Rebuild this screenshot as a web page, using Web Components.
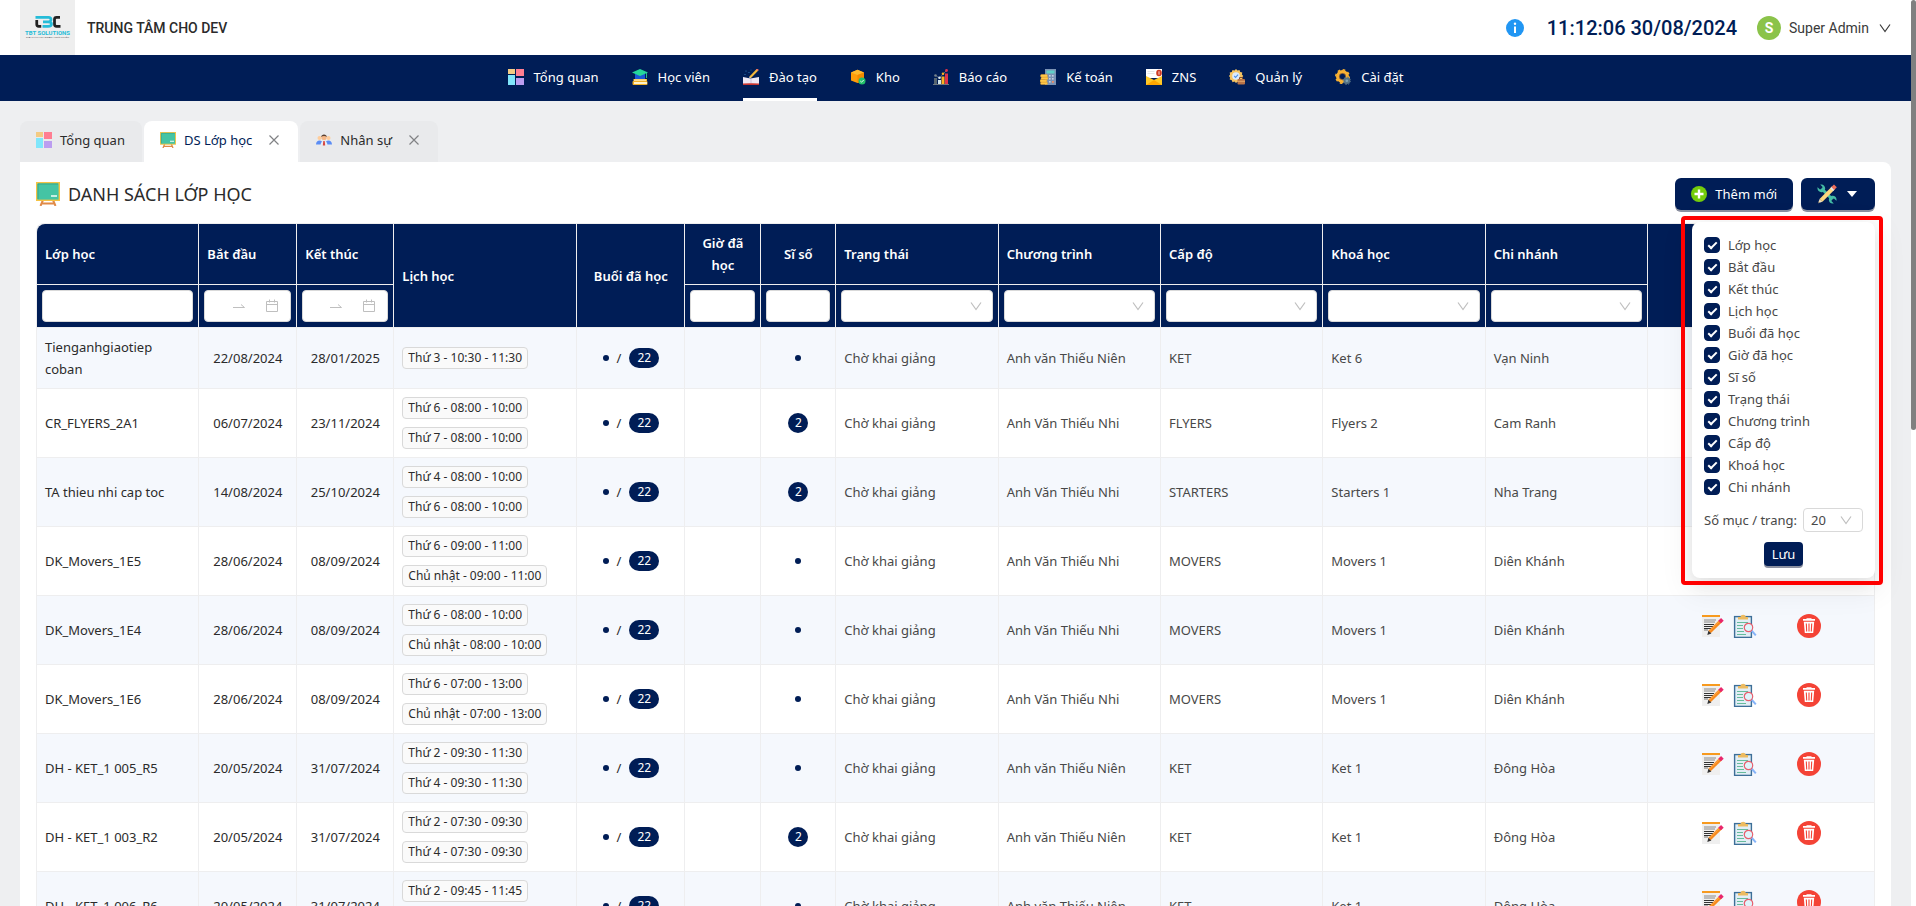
<!DOCTYPE html>
<html lang="vi">
<head>
<meta charset="utf-8">
<meta name="viewport" content="width=device-width, initial-scale=1">
<title>Danh sách lớp học</title>
<style>
  html, body { margin: 0; height: 100%; }
  body {
    --navy: #001d56;
    --line: #eeeeef;
    --text: #2b2b2b;
    font: 13px/22px "Noto Sans", "Open Sans", sans-serif;
    color: var(--text);
    background: #eeeff1;
  }
</style>
</head>
<body>
<app-shell>
  <app-header slot="header" org="TRUNG TÂM CHO DEV" time="11:12:06 30/08/2024" user="Super Admin"></app-header>
  <main-nav slot="nav">
    <nav-item icon="dashboard">Tổng quan</nav-item>
    <nav-item icon="student">Học viên</nav-item>
    <nav-item icon="training" active>Đào tạo</nav-item>
    <nav-item icon="box">Kho</nav-item>
    <nav-item icon="chart">Báo cáo</nav-item>
    <nav-item icon="accounting">Kế toán</nav-item>
    <nav-item icon="mail">ZNS</nav-item>
    <nav-item icon="manage">Quản lý</nav-item>
    <nav-item icon="settings">Cài đặt</nav-item>
  </main-nav>
  <page-tabs>
    <page-tab icon="dashboard">Tổng quan</page-tab>
    <page-tab icon="board" active closable>DS Lớp học</page-tab>
    <page-tab icon="people" closable>Nhân sự</page-tab>
  </page-tabs>
  <content-panel heading="DANH SÁCH LỚP HỌC" icon="board">
    <panel-button slot="actions" icon="plus">Thêm mới</panel-button>
    <column-menu slot="actions"></column-menu>
    <class-table></class-table>
  </content-panel>
</app-shell>

<script>
const ICONS = {
  dashboard: ['0 0 16 16', `<rect width="7" height="5" fill="#f3cb84"/><rect x="8" width="8" height="7" fill="#ff7e92"/><rect y="6" width="7" height="10" fill="#80e6fb"/><rect x="8" y="9" width="8" height="7" fill="#bb9df0"/>`],
  board: ['0 0 24 24', `<path d="M7 18 4.500 24M17 18l2.500 6M5.500 21.500h13" stroke="#e08a48" stroke-width="2" fill="none"/><rect x=".7" y=".7" width="22.600" height="17.600" fill="#45c4a4" stroke="#f5c344" stroke-width="1.400"/><path d="M2 17V2h20" fill="none" stroke="#36a589" stroke-width="1"/><rect x="15" y="13" width="6" height="2" fill="#c9eee3"/>`],
  people: ['0 0 16 16', `<circle cx="3.500" cy="6" r="2" fill="#ffcd9c"/><circle cx="12.500" cy="6" r="2" fill="#ffcd9c"/><path d="M0 12.500c0-5.500 7-5.500 7 0zM9 12.500c0-5.500 7-5.500 7 0z" fill="#5b8df5"/><path d="M4.500 13.500c0-6.500 7-6.500 7 0z" fill="#e8edf5"/><path d="M7.300 9h1.400l.5 4.500H6.800z" fill="#d8473f"/><circle cx="8" cy="5.500" r="2.600" fill="#f5b788"/><path d="M5.200 5C5 1.500 11 1.500 10.800 5 9.500 3.800 6.500 3.800 5.200 5z" fill="#5a4030"/>`],
  student: ['0 0 16 16', `<path d="M3 4.500h10V10H3z" fill="#1b58d6"/><path d="M8 0l8 3.500-8 3.500L0 3.500z" fill="#25d69a"/><path d="M14.500 4v5" stroke="#25b98f"/><path d="M1.500 10H15v2H1.500z" fill="#f6bd2f"/><path d="M2 10.700h12v.8H2z" fill="#fff"/><rect x=".5" y="12" width="15" height="4" rx="1" fill="#f2b026"/><path d="M2 13h13v2H2z" fill="#fff2c9"/>`],
  training: ['0 0 16 16', `<path d="M0 8l7.500 1.500L16 8v7.500l-8-.5-8 .5z" fill="#efe9f4"/><path d="M0 14.500l7-.3h2l7 .3V16H0z" fill="#c9352f"/><path d="M8 9.500V14" stroke="#bbaecb" stroke-width=".7"/><path d="M7 8.500L14.500.7" stroke="#f5b93b" stroke-width="2.200"/><path d="M14 1.300L15 .2" stroke="#ef6a6a" stroke-width="2.200"/><path d="M6.300 9.300l.3-1.500 1.200 1.100z" fill="#fff"/><g fill="#3f8fd0"><circle cx="3" cy="2" r=".5"/><circle cx="6" cy="3.500" r=".5"/><circle cx="2" cy="5.500" r=".5"/><circle cx="8" cy="1" r=".4"/></g>`],
  box: ['0 0 16 16', `<path d="M1 3.500L7.500.8 14 3.500v8L7.500 14 1 11.500z" fill="#ff9d0a"/><path d="M1 3.500L7.500.8 14 3.500 7.500 6z" fill="#ffb92e"/><path d="M7.500 6L14 3.500v8L7.500 14z" fill="#f28a00"/><circle cx="12" cy="12" r="3.500" fill="#22c06a"/><path d="M10.300 12l1.200 1.200 2.200-2.200" stroke="#fff" fill="none" stroke-width=".9"/>`],
  chart: ['0 0 16 16', `<rect x="1" y="9" width="3" height="6.500" fill="#56646f"/><rect x="5" y="11" width="3" height="4.500" fill="#cfe3ea"/><rect x="8.500" y="7.500" width="3" height="8" fill="#ffb01f"/><rect x="12" y="4.500" width="3" height="11" fill="#e0314a"/><path d="M2.500 6.500l4 2.500L10 5l3.500-3.500" stroke="#8b97a0" stroke-width=".6" fill="none"/><circle cx="2.500" cy="6.500" r="1.300" fill="#76838c"/><circle cx="6.500" cy="8.800" r="1.300" fill="#dcebf0"/><circle cx="10" cy="4.800" r="1.300" fill="#ffb01f"/><circle cx="13.500" cy="1.500" r="1.400" fill="#e0314a"/><path d="M0 15.500h16" stroke="#6d7880"/>`],
  accounting: ['0 0 16 16', `<rect x="5" width="11" height="16" fill="#7b93b5"/><rect x="6.500" y="1.500" width="8" height="3" fill="#60d0c8"/><g fill="#c6d4e4"><rect x="9" y="6" width="1.600" height="1.600"/><rect x="12" y="6" width="1.600" height="1.600"/><rect x="9" y="9" width="1.600" height="1.600"/><rect x="12" y="9" width="1.600" height="1.600"/><rect x="9" y="12" width="1.600" height="1.600"/></g><rect x="12" y="12" width="1.800" height="1.800" fill="#ef8a62"/><g fill="#ffc94a" stroke="#dd9a2c" stroke-width=".5"><rect x=".5" y="13" width="7" height="2.600" rx="1.200"/><rect x="0" y="10.500" width="7" height="2.600" rx="1.200"/><rect x="1" y="8" width="7" height="2.600" rx="1.200"/><rect x=".5" y="5.500" width="7" height="2.600" rx="1.200"/></g>`],
  mail: ['0 0 16 16', `<rect width="16" height="9" fill="#fff"/><path d="M1.500 2.500h7M1.500 4.500h7" stroke="#e6e6e6"/><path d="M0 7l8 4 8-4v9H0z" fill="#ffc928"/><path d="M0 16l8-5 8 5z" fill="#ffa600"/><ellipse cx="13" cy="4" rx="2.800" ry="3.200" fill="#cf3a22"/><path d="M13 2.300v3.400" stroke="#fff" stroke-width=".8"/>`],
  manage: ['0 0 16 16', `<path d="M7 0l1.500 1.500L10.500.9l.7 2 2.100.6-.4 2L14.300 7l-1.400 1.500.4 2.200-2.100.6-.7 2-2-.6L7 14l-1.500-1.400-2 .6-.7-2-2.100-.6.4-2.100L0 7l1.100-1.500-.4-2 2.100-.6.7-2 2 .6z" fill="#f6c462"/><circle cx="7" cy="7" r="3.800" fill="#dbeaff"/><path d="M5.200 7l1.400 1.400 2.500-2.700" stroke="#4c90e8" stroke-width="1.100" fill="none"/><path d="M10.500 10V8.500h3V10" stroke="#835036" fill="none"/><rect x="8.500" y="10" width="7.500" height="5.500" rx="1" fill="#b87348"/><path d="M8.500 12.300H16" stroke="#f3c07c" stroke-width=".7"/>`],
  settings: ['0 0 16 16', `<circle cx="7.500" cy="7.500" r="4.900" fill="none" stroke="#f9b233" stroke-width="3.200"/><circle cx="7.500" cy="7.500" r="6.700" fill="none" stroke="#f9b233" stroke-width="1.600" stroke-dasharray="2.630 2.630"/><circle cx="7.500" cy="7.500" r="3.200" fill="none" stroke="#c87b28" stroke-width=".6"/><circle cx="11.800" cy="11.800" r="3.300" fill="#557386"/><circle cx="11.800" cy="11.800" r="3.700" fill="none" stroke="#557386" stroke-width="1" stroke-dasharray="1.450 1.450"/><circle cx="11.800" cy="11.800" r="1.300" fill="#7fa4b6"/>`],
  close: ['0 0 12 12', `<path d="M1.500 1.500l9 9M10.500 1.500l-9 9" stroke="#808285" stroke-width="1.200"/>`],
  info: ['0 0 18 18', `<circle cx="9" cy="9" r="9" fill="#2196f3"/><circle cx="9" cy="4.800" r="1.200" fill="#fff"/><path d="M9 7.500v6.500" stroke="#fff" stroke-width="2"/>`],
  chevron: ['0 0 12 12', `<path d="M1 2.500l5 7 5-7" fill="none" stroke="currentColor" stroke-width="1.200"/>`],
  plus: ['0 0 16 16', `<circle cx="8" cy="8" r="8" fill="#74cc0b"/><path d="M8 3.500v9M3.500 8h9" stroke="#fff" stroke-width="2.400"/>`],
  tools: ['0 0 20 20', `<path d="M4.500 4.500l11 11" stroke="#45bda6" stroke-width="3"/><path d="M3.200.6L5.600 3 5 5 3 5.600.6 3.200C-.3 6.500 2.800 9 5.800 7.900L7.900 5.800C9 2.800 6.500-.3 3.200.6zM16.800 19.400L14.400 17l.6-2 2-.6 2.400 2.400c.9-3.300-2.200-5.800-5.200-4.700l-2.100 2.100c-1.100 3 1.400 6.100 4.700 5.200z" fill="#45bda6"/><path d="M4 16.300L16.300 4" stroke="#ffd67d" stroke-width="4"/><path d="M1 19.200l1.600-4.300 2.800 2.800z" fill="#f4e1ba"/><path d="M1 19.300l.6-1.700 1.100 1.100z" fill="#555"/><path d="M14.700 5.600l1.400-1.400" stroke="#dceef5" stroke-width="4"/><path d="M15.800 4.500L18.400 1.900" stroke="#ef705c" stroke-width="4"/>`],
  caret: ['0 0 10 6', `<path d="M0 0h10L5 6z" fill="#fff"/>`],
  arrow: ['0 0 12 12', `<path d="M0 7.500h11.500L8 4.500" fill="none" stroke="#bfbfbf"/>`],
  calendar: ['0 0 14 14', `<path d="M1.500 2.500h11v10h-11zM1.500 5.500h11M4.500.5v3M9.500.5v3" fill="none" stroke="#bfbfbf"/>`],
  edit: ['0 0 24 24', `<path d="M1 1h18v22H1z" fill="#efefef"/><path d="M1 1h18v2H1z" fill="#f79a1f"/><path d="M3 6h12M3 8h11" stroke="#8a8a8a"/><path d="M3 10.500h10M3 12.500h9M3 14.500h7" stroke="#333"/><path d="M3 16h4" stroke="#777"/><path d="M8.500 18L20 6.800" stroke="#f78a1e" stroke-width="3.400"/><path d="M8.500 17L19.500 6.200" stroke="#ffb254" stroke-width=".8"/><path d="M6.300 21l1.100-4.300 3 2.900z" fill="#333"/><path d="M18.600 8l2.800-2.700" stroke="#e9266b" stroke-width="3.800"/>`],
  inspect: ['0 0 24 24', `<rect x="1.600" y="2.600" width="16.800" height="20.800" fill="#e2eef6" stroke="#3d6f98" stroke-width="1.400"/><path d="M5 5V3h2.500c.3-3 5-3 5.300 0H15v2.500H5z" fill="#edbb60"/><path d="M4 8.500h11M4 11.500h6M4 14.500h6M4 17.500h7M4 20.500h9" stroke="#67bb9c" stroke-width="1"/><path d="M18.500 16.500l4.300 4.800" stroke="#86b4f8" stroke-width="2"/><circle cx="15.500" cy="13.500" r="4.200" fill="#dff4fb" stroke="#e85e6c" stroke-width="1.200"/>`],
  trash: ['0 0 24 24', `<circle cx="12" cy="12" r="12" fill="#f44336"/><path d="M9.500 5V4.300h5V5H18v1.700H6V5zM6.800 7.800h10.400l-1 11.200H7.800z" fill="#fff"/><path d="M9.300 9.500l.4 8M12 9.500v8M14.700 9.500l-.4 8" stroke="#f44336" stroke-width="1.100"/>`],
};

function define(tag, render) {
  customElements.define(tag, class extends HTMLElement {
    connectedCallback() {
      if (this.shadowRoot) return;
      this.attachShadow({ mode: 'open' }).innerHTML = render(this);
    }
  });
}

define('ui-icon', el => {
  const [box, body] = ICONS[el.getAttribute('name')];
  return `<style>:host{display:block;flex:none;width:16px;height:16px}svg{display:block;width:100%;height:100%}</style>
    <svg viewBox="${box}" aria-hidden="true">${body}</svg>`;
});

define('brand-logo', () => `
  <style>:host{display:block;width:55px;height:55px;background:#eee}svg{display:block;width:100%;height:100%}text{font-family:"Roboto",sans-serif;text-anchor:middle}</style>
  <svg viewBox="0 0 220 220" role="img" aria-label="TBT Solutions">
    <g fill="none" stroke-width="11">
      <path d="M67 80V97q0 8 8 8h10" stroke="#222"/>
      <path d="M62 69h52q10 0 10 9t-10 9H92M112 87q14 0 14 9t-14 9H90" stroke="#25bcd8"/>
      <path d="M160 69h-14q-8 0-8 8V97q0 8 8 8h16" stroke="#222"/>
    </g>
    <text x="110" y="140" font-size="24" font-weight="700" fill="#25bcd8">TBT SOLUTIONS</text>
    <text x="110" y="153" font-size="10" fill="#555">GIẢI PHÁP KINH DOANH TRỰC TUYẾN</text>
  </svg>`);

define('app-header', el => `
  <style>
    :host{display:flex;align-items:center;height:55px;padding:0 20px;background:#fff;font-family:"Roboto",sans-serif}
    h1{margin:0 auto 0 12px;font-size:14px;font-weight:500;line-height:22px}
    .info,.user{border:0;background:none;padding:0;font:inherit;color:inherit;display:flex;align-items:center}
    .info ui-icon{width:18px;height:18px}
    time{margin:0 20px 0 23px;font-size:20px;font-weight:500;color:var(--navy)}
    .user{gap:8px;font-size:14px;color:#3a3a3a}
    .avatar{width:24px;height:24px;border-radius:50%;background:#8bc34a;color:#fff;font-weight:700;line-height:24px;text-align:center}
    .user ui-icon{width:12px;height:12px;margin-left:2px}
  </style>
  <brand-logo></brand-logo>
  <h1>${el.getAttribute('org')}</h1>
  <button class="info" aria-label="Thông tin"><ui-icon name="info"></ui-icon></button>
  <time>${el.getAttribute('time')}</time>
  <button class="user"><span class="avatar">S</span><span>${el.getAttribute('user')}</span><ui-icon name="chevron"></ui-icon></button>`);

define('main-nav', () => `
  <style>:host{display:block;background:var(--navy)}nav{display:flex;justify-content:center;gap:33px}</style>
  <nav><slot></slot></nav>`);

define('nav-item', el => `
  <style>
    :host{display:block}
    a{display:flex;align-items:center;gap:10px;height:43px;border-bottom:3px solid transparent;color:#fff;text-decoration:none}
    :host([active]) a{border-color:#fff}
  </style>
  <a href="#"><ui-icon name="${el.getAttribute('icon')}"></ui-icon><span><slot></slot></span></a>`);

define('page-tabs', () => `<style>:host{display:flex;gap:2px;padding-top:20px}</style><slot></slot>`);

define('page-tab', el => `
  <style>
    :host{display:flex;align-items:center;height:37px;padding:0 17px 4px 16px;border-radius:8px 8px 0 0;background:#e9eaec}
    :host([active]){background:#fff;color:var(--navy)}
    :host([closable]){padding-right:18px}
    a{display:flex;align-items:center;gap:8px;color:inherit;text-decoration:none}
    button{border:0;background:none;padding:0;margin-left:16px}
    button ui-icon{width:12px;height:12px}
  </style>
  <a href="#"><ui-icon name="${el.getAttribute('icon')}"></ui-icon><span><slot></slot></span></a>
  ${el.hasAttribute('closable') ? '<button aria-label="Đóng"><ui-icon name="close"></ui-icon></button>' : ''}`);

define('content-panel', el => `
  <style>
    :host{display:block;padding:16px 16px 24px;background:#fff;border-radius:0 8px 0 0}
    header{display:flex;align-items:center;gap:8px;height:32px;margin-bottom:13px}
    header ui-icon{width:24px;height:24px}
    h2{margin:0 auto 0 0;font-size:18px;font-weight:400;line-height:24px}
  </style>
  <header><ui-icon name="${el.getAttribute('icon')}"></ui-icon><h2>${el.getAttribute('heading')}</h2><slot name="actions"></slot></header>
  <slot></slot>`);

define('panel-button', el => `
  <style>
    :host{display:block}
    button{display:flex;align-items:center;gap:8px;height:32px;padding:0 16px;border:0;border-radius:6px;background:var(--navy);color:#fff;font:inherit;box-shadow:0 2px 0 #8b90a0}
  </style>
  <button><ui-icon name="${el.getAttribute('icon')}"></ui-icon><slot></slot></button>`);

const COLUMNS = ['Lớp học','Bắt đầu','Kết thúc','Lịch học','Buổi đã học','Giờ đã học','Sĩ số','Trạng thái','Chương trình','Cấp độ','Khoá học','Chi nhánh'];

define('column-menu', () => `
  <style>
    :host{display:block;position:relative}
    button{display:flex;align-items:center;border:0;background:var(--navy);color:#fff;font:inherit;box-shadow:0 2px 0 #8b90a0}
    .toggle{gap:10px;width:74px;height:32px;padding:0 16px;border-radius:6px}
    .toggle ui-icon:first-child{width:20px;height:20px}
    .toggle ui-icon:last-child{width:10px;height:6px}
    .menu{position:absolute;z-index:2;top:44px;right:0;width:159px;padding:12px;background:#fff;border-radius:8px;box-shadow:0 6px 16px rgba(0,0,0,.08),0 9px 28px 8px rgba(0,0,0,.05)}
    .mark{position:absolute;inset:-6px -8px -7px -11px;border:4px solid #f00;border-radius:4px;pointer-events:none}
    ul{list-style:none;margin:0;padding:0}
    label{display:flex;align-items:center;gap:8px;color:#484848}
    input{appearance:none;display:grid;place-items:center;width:16px;height:16px;margin:0;border-radius:4px;background:#fff;border:1px solid #d9d9d9}
    input:checked{background:var(--navy);border-color:var(--navy)}
    input:checked::after{content:"";width:3px;height:7px;margin-bottom:2px;border:solid #fff;border-width:0 2px 2px 0;transform:rotate(45deg)}
    .size{gap:4px;margin:10px 0;white-space:nowrap;justify-content:space-between}
    .pick{position:relative;display:block;width:60px}
    select{appearance:none;display:block;box-sizing:border-box;width:100%;height:24px;padding:0 7px;border:1px solid #d9d9d9;border-radius:4px;background:#fff;font:inherit;color:inherit}
    .pick ui-icon{position:absolute;right:11px;top:6px;width:12px;height:12px;color:#bfbfbf;pointer-events:none}
    .save{height:24px;margin:0 auto;padding:0 8px;border-radius:4px}
  </style>
  <button class="toggle" aria-label="Tuỳ chọn cột"><ui-icon name="tools"></ui-icon><ui-icon name="caret"></ui-icon></button>
  <div class="menu">
    <ul>${COLUMNS.map(c => `<li><label><input type="checkbox" checked>${c}</label></li>`).join('')}</ul>
    <label class="size">Số mục / trang:<span class="pick"><select><option>20</option><option>50</option></select><ui-icon name="chevron"></ui-icon></span></label>
    <button class="save">Lưu</button>
    <div class="mark"></div>
  </div>`);

define('filter-select', el => `
  <style>
    :host{display:block;position:relative}
    select{appearance:none;display:block;box-sizing:border-box;width:100%;height:32px;border:1px solid #d9d9d9;border-radius:4px;background:#fff}
    ui-icon{position:absolute;right:11px;top:10px;width:12px;height:12px;color:#bfbfbf;pointer-events:none}
  </style>
  <select aria-label="${el.getAttribute('label')}"><option></option></select><ui-icon name="chevron"></ui-icon>`);

define('filter-text', el => `
  <style>:host{display:block}input{display:block;box-sizing:border-box;width:100%;height:32px;padding:0 11px;border:1px solid #d9d9d9;border-radius:4px;font:inherit}</style>
  <input type="text" aria-label="${el.getAttribute('label')}">`);

define('filter-range', el => `
  <style>
    :host{display:flex;align-items:center;box-sizing:border-box;height:32px;padding:0 11px;border:1px solid #d9d9d9;border-radius:4px;background:#fff}
    input{flex:1;width:0;min-width:0;border:0;padding:0;font:inherit}
    ui-icon{width:12px;height:12px}
    ui-icon:last-child{width:14px;height:14px;margin-left:4px}
  </style>
  <input type="text" aria-label="${el.getAttribute('label')} từ ngày"><ui-icon name="arrow"></ui-icon>
  <input type="text" aria-label="${el.getAttribute('label')} đến ngày"><ui-icon name="calendar"></ui-icon>`);

define('count-badge', () => `
  <style>:host{display:block;box-sizing:border-box;min-width:20px;height:20px;padding:0 6px;border-radius:10px;background:var(--navy);color:#fff;font-size:12px;line-height:20px;text-align:center}
  :host([wide]){padding:0 8px}
  :host([dot]){min-width:0;width:6px;height:6px;padding:0;border-radius:50%}</style><slot></slot>`);

define('schedule-tag', () => `
  <style>:host{display:block;width:max-content;padding:0 5px;border:1px solid #d9d9d9;border-radius:4px;background:#fafafa;font-size:12px;line-height:20px}</style><slot></slot>`);

const ROWS = [
  ['Tienganhgiaotiep coban','22/08/2024','28/01/2025',['Thứ 3 - 10:30 - 11:30'],0,'Anh văn Thiếu Niên','KET','Ket 6','Vạn Ninh'],
  ['CR_FLYERS_2A1','06/07/2024','23/11/2024',['Thứ 6 - 08:00 - 10:00','Thứ 7 - 08:00 - 10:00'],2,'Anh Văn Thiếu Nhi','FLYERS','Flyers 2','Cam Ranh'],
  ['TA thieu nhi cap toc','14/08/2024','25/10/2024',['Thứ 4 - 08:00 - 10:00','Thứ 6 - 08:00 - 10:00'],2,'Anh Văn Thiếu Nhi','STARTERS','Starters 1','Nha Trang'],
  ['DK_Movers_1E5','28/06/2024','08/09/2024',['Thứ 6 - 09:00 - 11:00','Chủ nhật - 09:00 - 11:00'],0,'Anh Văn Thiếu Nhi','MOVERS','Movers 1','Diên Khánh'],
  ['DK_Movers_1E4','28/06/2024','08/09/2024',['Thứ 6 - 08:00 - 10:00','Chủ nhật - 08:00 - 10:00'],0,'Anh Văn Thiếu Nhi','MOVERS','Movers 1','Diên Khánh'],
  ['DK_Movers_1E6','28/06/2024','08/09/2024',['Thứ 6 - 07:00 - 13:00','Chủ nhật - 07:00 - 13:00'],0,'Anh Văn Thiếu Nhi','MOVERS','Movers 1','Diên Khánh'],
  ['DH - KET_1 005_R5','20/05/2024','31/07/2024',['Thứ 2 - 09:30 - 11:30','Thứ 4 - 09:30 - 11:30'],0,'Anh văn Thiếu Niên','KET','Ket 1','Đông Hòa'],
  ['DH - KET_1 003_R2','20/05/2024','31/07/2024',['Thứ 2 - 07:30 - 09:30','Thứ 4 - 07:30 - 09:30'],2,'Anh văn Thiếu Niên','KET','Ket 1','Đông Hòa'],
  ['DH - KET_1 006_R6','20/05/2024','31/07/2024',['Thứ 2 - 09:45 - 11:45','Thứ 4 - 09:45 - 11:45'],0,'Anh văn Thiếu Niên','KET','Ket 1','Đông Hòa'],
];

define('class-table', () => {
  const widths = [0, 98, 97, 183, 108, 76, 75, 0, 0, 0, 0, 0, 227];
  const cols = widths.map(w => w ? `<col style="width:${w}px">` : '<col>').join('');
  const centered = [4, 5, 6];
  const spanning = [3, 4];
  const head = COLUMNS.map((c, i) =>
    `<th scope="col" class="${centered.includes(i) ? 'c' : ''}"${spanning.includes(i) ? ' rowspan="2"' : ''}>${c}</th>`).join('');
  const filters = COLUMNS.map((c, i) => {
    if (spanning.includes(i)) return '';
    const kind = i === 1 || i === 2 ? 'range' : i > 6 ? 'select' : 'text';
    return `<td><filter-${kind} label="${c}"></filter-${kind}></td>`;
  }).join('');
  const body = ROWS.map(r => `<tr>
    <td>${r[0]}</td><td class="c">${r[1]}</td><td class="c">${r[2]}</td>
    <td><div class="tags">${r[3].map(t => `<schedule-tag>${t}</schedule-tag>`).join('')}</div></td>
    <td><div class="badges"><count-badge dot></count-badge><span>/</span><count-badge wide>22</count-badge></div></td>
    <td></td>
    <td><div class="badges">${r[4] ? `<count-badge>${r[4]}</count-badge>` : '<count-badge dot></count-badge>'}</div></td>
    <td class="soft">Chờ khai giảng</td>${r.slice(5).map(v => `<td class="soft">${v}</td>`).join('')}
    <td><div class="acts"><button aria-label="Sửa"><ui-icon name="edit"></ui-icon></button><button aria-label="Xem chi tiết"><ui-icon name="inspect"></ui-icon></button><button class="del" aria-label="Xoá"><ui-icon name="trash"></ui-icon></button></div></td>
  </tr>`).join('');
  return `
  <style>
    :host{display:block}
    table{width:100%;table-layout:fixed;border-collapse:separate;border-spacing:0;border:solid var(--line);border-width:1px 0 0 1px;border-radius:8px 8px 0 0}
    th,td{padding:8px;border:solid var(--line);border-width:0 1px 1px 0;text-align:left;vertical-align:middle}
    th{background:var(--navy);color:#fff;font-weight:600}
    th:first-child{border-top-left-radius:8px}
    th:last-child{border-top-right-radius:8px}
    thead td{padding:5px;background:var(--navy)}
    th.c,td.c{text-align:center}
    tbody tr:nth-child(odd){background:#f5f8fd}
    .soft{color:#484848}
    .tags{display:grid;gap:8px}
    .badges{display:flex;align-items:center;justify-content:center;gap:8px}
    .acts{display:flex;justify-content:center;gap:8px;padding-bottom:8px}
    .acts button{border:0;padding:0;background:none}
    .acts ui-icon{width:24px;height:24px}
    .del{margin-left:32px}
  </style>
  <table><colgroup>${cols}</colgroup>
    <thead><tr>${head}<th rowspan="2"></th></tr><tr>${filters}</tr></thead>
    <tbody>${body}</tbody></table>`;
});

define('app-shell', () => `
  <style>
    :host{display:flex;height:100vh;overflow:hidden}
    .page{flex:1;min-width:0;overflow:auto;scrollbar-width:none}
    main{padding:0 20px}
    .rail{width:5px;background:#fff}
    .thumb{height:430px;max-height:50%;border-radius:4px;background:#808080}
  </style>
  <div class="page"><slot name="header"></slot><slot name="nav"></slot><main><slot></slot></main></div>
  <div class="rail" aria-hidden="true"><div class="thumb"></div></div>`);
</script>
</body>
</html>
